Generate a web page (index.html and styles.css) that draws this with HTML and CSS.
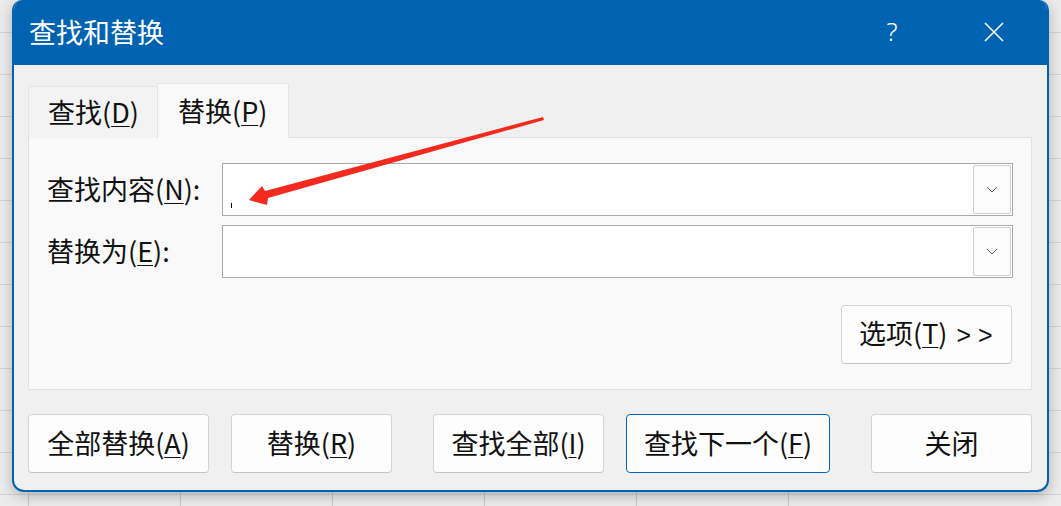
FILE: index.html
```
<!DOCTYPE html>
<html lang="zh-CN">

<head>
    <meta charset="UTF-8">
    <meta name="viewport" content="width=device-width, initial-scale=1.0">
    <title>查找和替换</title>
    <link rel="stylesheet" href="styles.css">
</head>

<body>
    <div class="dialog">
        <!-- 标题栏 -->
        <div class="titlebar">
            <span class="title">查找和替换</span>
            <span class="help">?</span>
            <span class="close">
                <svg width="20" height="20" viewBox="0 0 20 20">
                    <path d="M1 1 L19 19 M19 1 L1 19" stroke="#fff" stroke-width="1.6" fill="none" />
                </svg>
            </span>
        </div>

        <div class="body">
            <!-- 选项卡 -->
            <div class="tabs">
                <div class="tab">查找(<u>D</u>)</div>
                <div class="tab active">替换(<u>P</u>)</div>
            </div>

            <div class="panel">
                <div class="form">
                    <label class="label">查找内容(<u>N</u>):</label>
                    <div class="combo">
                        <div class="field"><i class="caret"></i></div>
                        <div class="drop">
                            <svg width="12" height="7" viewBox="0 0 12 7">
                                <polyline points="1,1 6,6 11,1" stroke="#555" stroke-width="1" fill="none" />
                            </svg>
                        </div>
                    </div>

                    <label class="label">替换为(<u>E</u>):</label>
                    <div class="combo">
                        <div class="field"></div>
                        <div class="drop">
                            <svg width="12" height="7" viewBox="0 0 12 7">
                                <polyline points="1,1 6,6 11,1" stroke="#555" stroke-width="1" fill="none" />
                            </svg>
                        </div>
                    </div>
                </div>

                <div class="more">
                    <button class="btn btn-options">选项(<u>T</u>) <span class="chev">&gt; &gt;</span></button>
                </div>
            </div>

            <!-- 底部按钮 -->
            <div class="actions">
                <div class="group">
                    <button class="btn w181">全部替换(<u>A</u>)</button>
                    <button class="btn w161">替换(<u>R</u>)</button>
                </div>
                <div class="group">
                    <button class="btn w171">查找全部(<u>I</u>)</button>
                    <button class="btn w204 focus">查找下一个(<u>F</u>)</button>
                </div>
                <div class="group">
                    <button class="btn w161">关闭</button>
                </div>
            </div>
        </div>
    </div>

    <!-- 红色箭头标注 -->
    <svg class="arrow" width="1061" height="506" viewBox="0 0 1061 506">
        <polygon points="249,200 262,186 265,191 543,117 544,120 268,198 267,205" fill="#f52a1f" />
    </svg>
</body>

</html>
```

FILE: styles.css
```
* {
    margin: 0;
    padding: 0;
    box-sizing: border-box;
}

body {
    width: 1061px;
    height: 506px;
    overflow: hidden;
    position: relative;
    font-family: "Noto Sans CJK SC", "Noto Sans", sans-serif;
    color: #111;
    background-color: #ececec;
    background-image:
        repeating-linear-gradient(to bottom, transparent 0 41px, #d4d4d4 41px 42px),
        repeating-linear-gradient(to right, transparent 0 151px, #c6c6c6 151px 152px);
    background-position: 0 -9px, -123px 0;
}

u {
    text-decoration: underline;
    text-underline-offset: 3px;
    text-decoration-thickness: 1px;
}

.dialog {
    margin-left: 12px;
    width: 1037px;
    height: 492px;
    border: 2px solid #0063b1;
    border-top: 0;
    border-radius: 10px 10px 12px 12px;
    background-color: #f0f0f0;
    overflow: hidden;
    box-shadow: 0 4px 14px rgba(0, 0, 0, .25);
}

/* 标题栏 */
.titlebar {
    height: 65px;
    background-color: #0063b1;
    color: #fff;
    display: flex;
    align-items: center;
}

.title {
    flex: 1;
    padding-left: 15px;
    font-size: 27px;
    line-height: 1;
    padding-bottom: 2px;
}

.help {
    width: 40px;
    margin-right: -3px;
    text-align: center;
    font-family: "Noto Sans", sans-serif;
    font-weight: 300;
    font-size: 26px;
    line-height: 1;
    padding-bottom: 3px;
}

.close {
    width: 60px;
    margin-left: 55px;
    margin-right: 23px;
    display: flex;
    justify-content: center;
    padding-bottom: 2px;
}

.body {
    padding: 18px 15px 0 14px;
}

/* 选项卡 */
.tabs {
    display: flex;
    align-items: flex-end;
    position: relative;
    z-index: 1;
}

.tab {
    width: 129px;
    height: 52px;
    padding-left: 19px;
    font-size: 27px;
    line-height: 50px;
    background-color: #f3f3f3;
    border: 1px solid #e4e4e4;
    border-bottom: 0;
    border-right: 0;
}

.tab.active {
    width: 132px;
    height: 55px;
    padding-left: 20px;
    line-height: 54px;
    background-color: #f9f9f9;
    border-right: 1px solid #e4e4e4;
}

.panel {
    margin-top: -1px;
    height: 253px;
    background-color: #f9f9f9;
    border: 1px solid #e1e1e1;
    padding: 25px 18px 0 18px;
}

.form {
    display: grid;
    grid-template-columns: 175px 1fr;
    row-gap: 9px;
    align-items: center;
}

.label {
    font-size: 27px;
    line-height: 1;
    padding-bottom: 2px;
}

.combo {
    height: 53px;
    display: flex;
    background-color: #fff;
    border: 1px solid #a9a9a9;
    padding: 1px;
}

.field {
    flex: 1;
    display: flex;
    align-items: flex-end;
    padding: 0 0 6px 7px;
}

.caret {
    display: block;
    width: 1px;
    height: 5px;
    background-color: #000;
}

.drop {
    width: 38px;
    border: 1px solid #cfcfcf;
    border-radius: 2px;
    background-color: #fcfcfc;
    display: flex;
    align-items: center;
    justify-content: center;
}

.more {
    display: flex;
    justify-content: flex-end;
    margin-top: 27px;
    padding-right: 1px;
}

/* 按钮 */
.btn {
    height: 59px;
    font-family: inherit;
    font-size: 27px;
    color: #111;
    background-color: #fdfdfd;
    border: 1px solid #d4d4d4;
    border-bottom-color: #c4c4c4;
    border-radius: 4px;
    line-height: 1;
    padding-bottom: 2px;
}

.btn-options {
    width: 171px;
    text-align: left;
    padding-left: 17px;
}

.btn-options .chev {
    font-family: "Liberation Sans", sans-serif;
    font-size: 25px;
    margin-left: 3px;
}

.btn.focus {
    border: 1px solid #0067c0;
}

.w161 { width: 161px; }
.w171 { width: 171px; }
.w181 { width: 181px; }
.w204 { width: 204px; }

.actions {
    margin-top: 24px;
    display: flex;
    justify-content: space-between;
}

.group {
    display: flex;
    gap: 22px;
}

.arrow {
    position: absolute;
    left: 0;
    top: 0;
    pointer-events: none;
}
```
